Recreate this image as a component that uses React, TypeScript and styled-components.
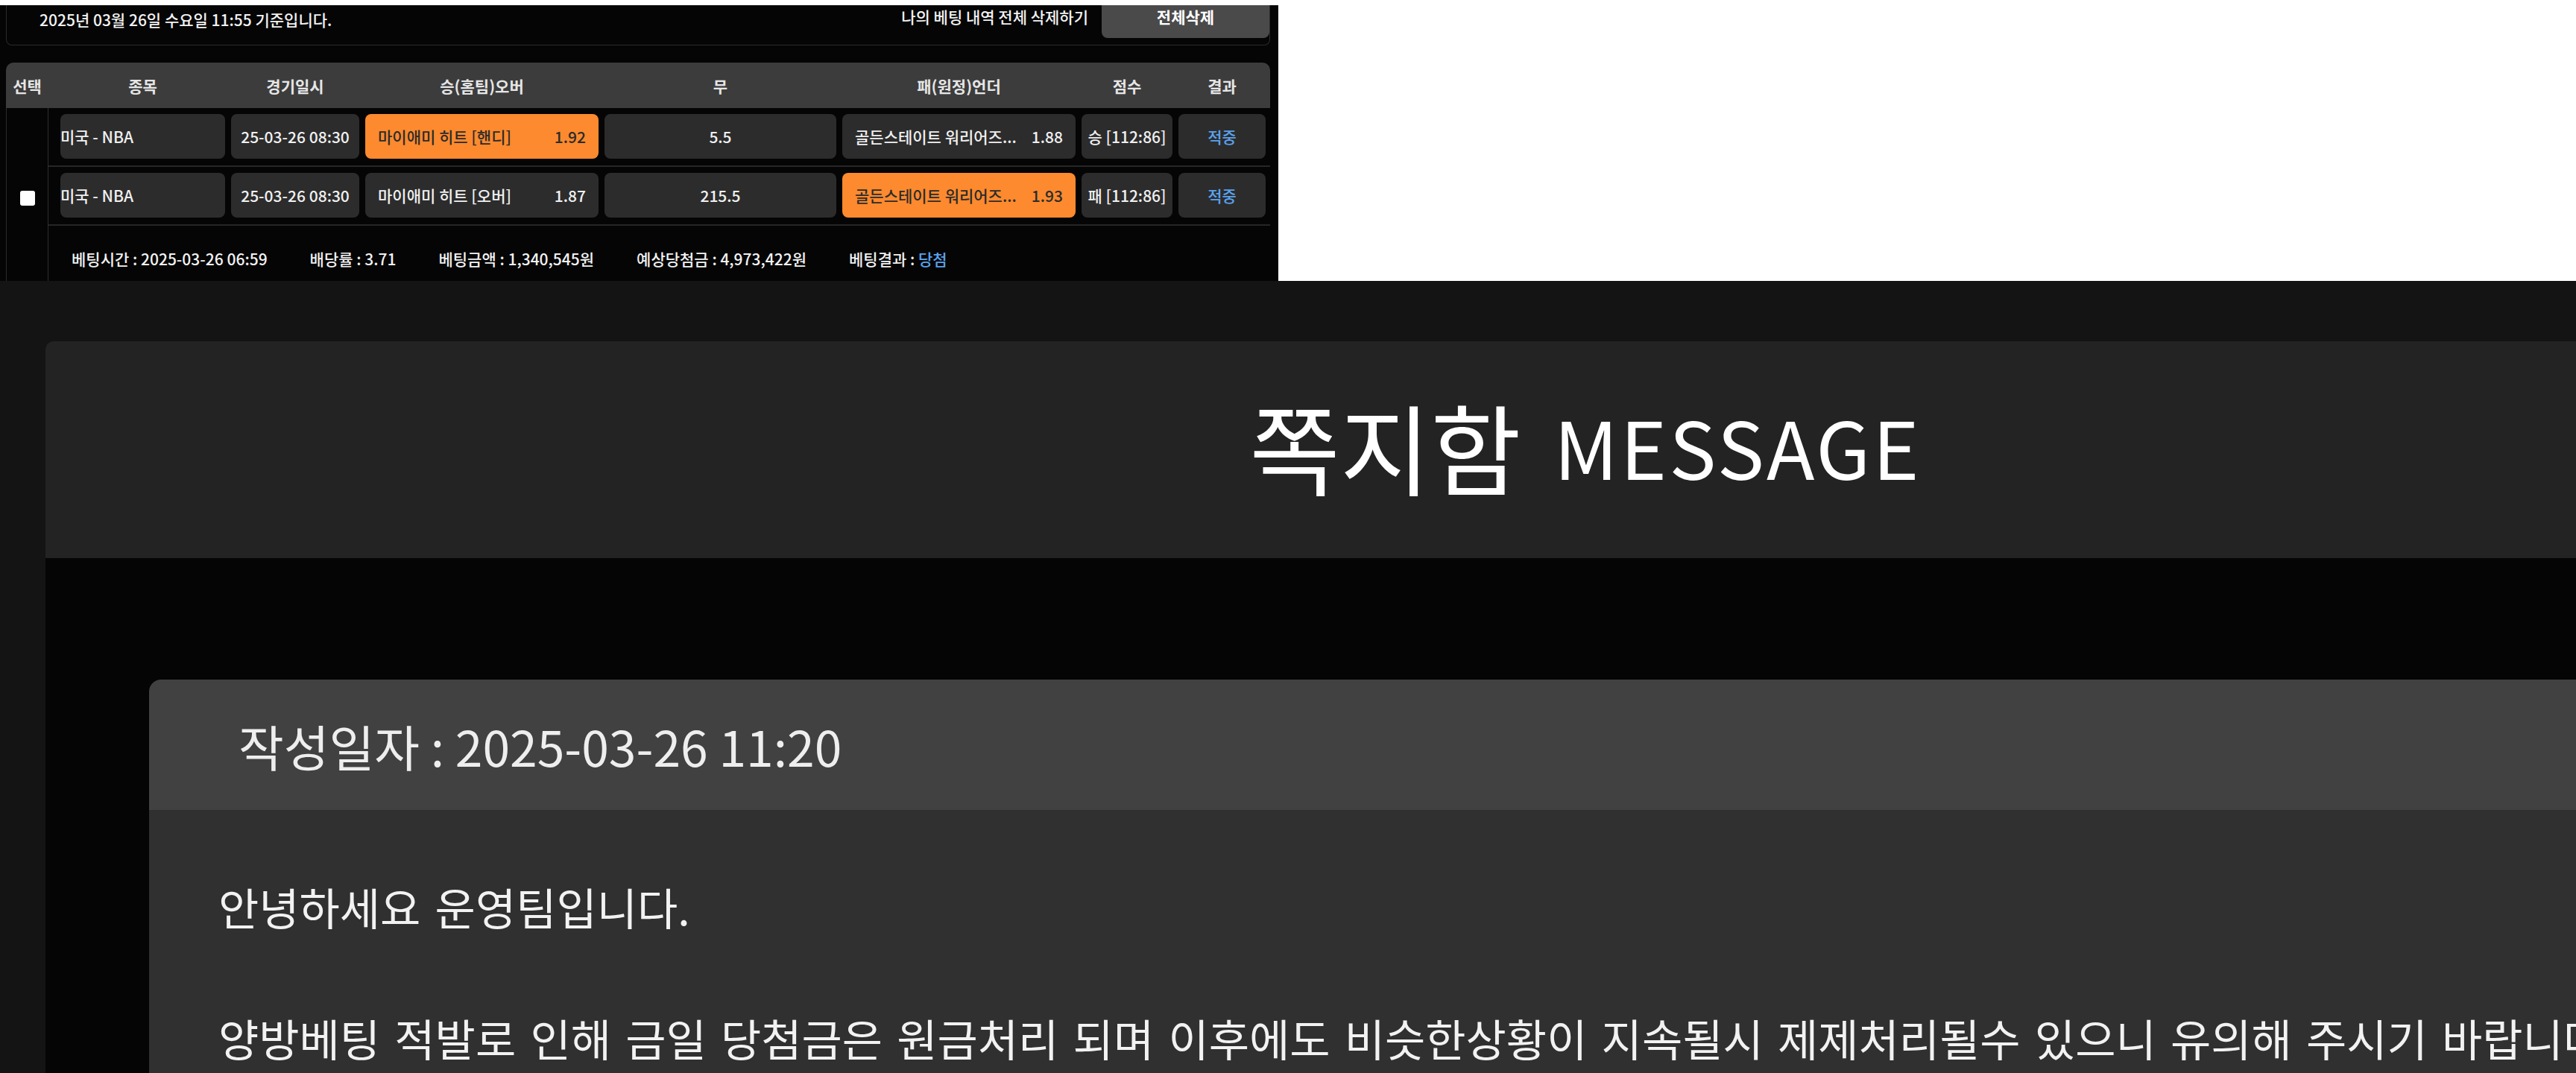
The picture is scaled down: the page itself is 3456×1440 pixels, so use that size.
import React from "react";
import styled, { createGlobalStyle } from "styled-components";

const GlobalStyle = createGlobalStyle`
  html, body {
    margin: 0;
    padding: 0;
    background: #141414;
    overflow: hidden;
  }
  body {
    font-family: "Noto Sans CJK KR", "Noto Sans", sans-serif;
  }
`;

const COLUMNS = "221px 172px 313px 311px 313px 122px 117px";

type Pick = { team: string; odds: string; picked?: boolean };

type Game = {
  league: string;
  date: string;
  home: Pick;
  draw: string;
  away: Pick;
  score: string;
  result: string;
};

const games: Game[] = [
  {
    league: "미국 - NBA",
    date: "25-03-26 08:30",
    home: { team: "마이애미 히트 [핸디]", odds: "1.92", picked: true },
    draw: "5.5",
    away: { team: "골든스테이트 워리어즈...", odds: "1.88" },
    score: "승 [112:86]",
    result: "적중",
  },
  {
    league: "미국 - NBA",
    date: "25-03-26 08:30",
    home: { team: "마이애미 히트 [오버]", odds: "1.87" },
    draw: "215.5",
    away: { team: "골든스테이트 워리어즈...", odds: "1.93", picked: true },
    score: "패 [112:86]",
    result: "적중",
  },
];

/* ---------- bet history panel ---------- */

const TopArea = styled.div`
  background: #fff;
  padding-top: 7px;
  height: 377px;
  box-sizing: border-box;
`;

const BetPanel = styled.section`
  width: 1715px;
  height: 370px;
  box-sizing: border-box;
  padding: 0 11px 0 8px;
  background: #050505;
  color: #f2f2f2;
  font-size: 21px;
  font-weight: 500;
  overflow: hidden;
`;

const InfoBox = styled.div`
  display: flex;
  align-items: flex-start;
  height: 54px;
  box-sizing: border-box;
  padding: 0 0 0 44px;
  border: 1px solid #2c2c2c;
  border-top: none;
  border-radius: 0 0 8px 8px;
  margin-bottom: 23px;
`;

const InfoText = styled.div`
  flex: 1;
  padding-top: 5px;
  line-height: 28px;
`;

const DeleteLabel = styled.div`
  line-height: 28px;
  margin-top: 1px;
`;

const DeleteButton = styled.button`
  width: 225px;
  height: 44px;
  margin-left: 18px;
  padding: 1px 0 0;
  border: none;
  border-radius: 0 0 8px 8px;
  background: #4a4a4a;
  color: #fff;
  font: inherit;
  font-weight: 700;
  line-height: 28px;
  display: flex;
  justify-content: center;
  align-items: flex-start;
`;

const HeadBar = styled.div`
  display: flex;
  height: 61px;
  background: #3c3c3c;
  border-radius: 10px 10px 0 0;
  color: #e6e6e6;
  font-weight: 700;
`;

const HeadCheck = styled.div`
  width: 57px;
  display: flex;
  align-items: center;
  justify-content: center;
`;

const HeadCells = styled.div`
  flex: 1;
  display: grid;
  grid-template-columns: ${COLUMNS};
  column-gap: 8px;
  padding: 0 6px 0 16px;
  align-items: center;
  text-align: center;
`;

const TableBody = styled.div`
  display: flex;
  border-left: 1px solid #2a2a2a;
`;

const CheckCol = styled.div`
  width: 56px;
  border-right: 1px solid #2e2e2e;
  display: flex;
  align-items: center;
  justify-content: center;
  padding-top: 10px;
`;

const CheckBox = styled.span`
  width: 20px;
  height: 20px;
  border-radius: 3px;
  background: #fff;
`;

const Rows = styled.div`
  flex: 1;
`;

const GameRow = styled.div`
  display: grid;
  grid-template-columns: ${COLUMNS};
  column-gap: 8px;
  padding: 8px 6px 9px 16px;
  border-bottom: 2px solid #262626;
`;

const Cell = styled.div<{ $align?: "left" | "center" | "split"; $picked?: boolean; $blue?: boolean }>`
  height: 60px;
  display: flex;
  align-items: center;
  justify-content: ${(p) =>
    p.$align === "left" ? "flex-start" : p.$align === "split" ? "space-between" : "center"};
  padding: ${(p) => (p.$align === "split" ? "0 17px" : "0")};
  border-radius: 8px;
  background: ${(p) => (p.$picked ? "#fd8a2e" : "#2c2c2c")};
  color: ${(p) => (p.$picked ? "#2b2b2b" : p.$blue ? "#5aa2ee" : "#f0f0f0")};
  white-space: nowrap;
  overflow: hidden;
`;

const Summary = styled.div`
  display: flex;
  gap: 57px;
  height: 74px;
  box-sizing: border-box;
  padding: 14px 0 0 31px;
  align-items: center;
`;

const Blue = styled.span`
  color: #5aa2ee;
`;

/* ---------- message box ---------- */

const MessagePage = styled.div`
  width: 4193px;
  padding: 81px 0 0 61px;
  background: #141414;
  box-sizing: border-box;
`;

const MessageWrap = styled.div`
  background: #050505;
  min-height: 1000px;
  border-top-left-radius: 10px;
`;

const TitleBar = styled.div`
  height: 291px;
  box-sizing: border-box;
  padding-bottom: 12px;
  display: flex;
  align-items: center;
  justify-content: center;
  background: #232323;
  border-top-left-radius: 10px;
  color: #fff;
  font-size: 132px;
  font-weight: 400;
`;

const TitleEn = styled.span`
  margin-left: 44px;
  font-size: 106px;
  letter-spacing: 3px;
`;

const Content = styled.div`
  padding: 163px 117px 0 139px;
`;

const Card = styled.article`
  border-radius: 16px 16px 0 0;
  overflow: hidden;
`;

const CardHead = styled.div`
  height: 175px;
  display: flex;
  align-items: center;
  padding-left: 120px;
  background: #414141;
  color: #eee;
  font-size: 66px;
`;

const CardBody = styled.div`
  min-height: 600px;
  padding: 86px 93px;
  background: #303030;
  color: #f2f2f2;
  font-size: 59px;
  line-height: 88px;
  word-spacing: 6px;
  white-space: nowrap;
`;

const PickCell = ({ pick }: { pick: Pick }) => (
  <Cell $align="split" $picked={pick.picked}>
    <span>{pick.team}</span>
    <span>{pick.odds}</span>
  </Cell>
);

export default function App() {
  return (
    <>
      <GlobalStyle />
      <TopArea>
        <BetPanel>
          <InfoBox>
            <InfoText>2025년 03월 26일 수요일 11:55 기준입니다.</InfoText>
            <DeleteLabel>나의 베팅 내역 전체 삭제하기</DeleteLabel>
            <DeleteButton>전체삭제</DeleteButton>
          </InfoBox>

          <HeadBar>
            <HeadCheck>선택</HeadCheck>
            <HeadCells>
              <span>종목</span>
              <span>경기일시</span>
              <span>승(홈팀)오버</span>
              <span>무</span>
              <span>패(원정)언더</span>
              <span>점수</span>
              <span>결과</span>
            </HeadCells>
          </HeadBar>

          <TableBody>
            <CheckCol>
              <CheckBox />
            </CheckCol>
            <Rows>
              {games.map((g, i) => (
                <GameRow key={i}>
                  <Cell $align="left">{g.league}</Cell>
                  <Cell>{g.date}</Cell>
                  <PickCell pick={g.home} />
                  <Cell>{g.draw}</Cell>
                  <PickCell pick={g.away} />
                  <Cell>{g.score}</Cell>
                  <Cell $blue>{g.result}</Cell>
                </GameRow>
              ))}
              <Summary>
                <span>베팅시간 : 2025-03-26 06:59</span>
                <span>배당률 : 3.71</span>
                <span>베팅금액 : 1,340,545원</span>
                <span>예상당첨금 : 4,973,422원</span>
                <span>
                  베팅결과 : <Blue>당첨</Blue>
                </span>
              </Summary>
            </Rows>
          </TableBody>
        </BetPanel>
      </TopArea>

      <MessagePage>
        <MessageWrap>
          <TitleBar>
            쪽지함<TitleEn>MESSAGE</TitleEn>
          </TitleBar>
          <Content>
            <Card>
              <CardHead>작성일자 : 2025-03-26 11:20</CardHead>
              <CardBody>
                안녕하세요 운영팀입니다.
                <br />
                <br />
                양방베팅 적발로 인해 금일 당첨금은 원금처리 되며 이후에도 비슷한상황이 지속될시 제제처리될수 있으니 유의해 주시기 바랍니다.
              </CardBody>
            </Card>
          </Content>
        </MessageWrap>
      </MessagePage>
    </>
  );
}
